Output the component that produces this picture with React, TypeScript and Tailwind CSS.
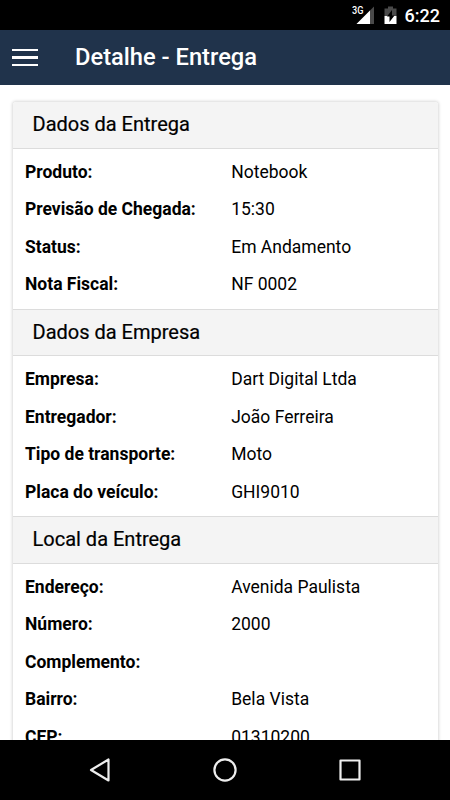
const sections = [
  {
    title: 'Dados da Entrega',
    rows: [
      ['Produto:', 'Notebook'],
      ['Previsão de Chegada:', '15:30'],
      ['Status:', 'Em Andamento'],
      ['Nota Fiscal:', 'NF 0002'],
    ],
  },
  {
    title: 'Dados da Empresa',
    rows: [
      ['Empresa:', 'Dart Digital Ltda'],
      ['Entregador:', 'João Ferreira'],
      ['Tipo de transporte:', 'Moto'],
      ['Placa do veículo:', 'GHI9010'],
    ],
  },
  {
    title: 'Local da Entrega',
    rows: [
      ['Endereço:', 'Avenida Paulista'],
      ['Número:', '2000'],
      ['Complemento:', ''],
      ['Bairro:', 'Bela Vista'],
      ['CEP:', '01310200'],
    ],
  },
];

function StatusBar() {
  return (
    <div className="flex h-[30px] shrink-0 items-center justify-end bg-black pr-[10px] text-white">
      <svg width="24" height="30" viewBox="0 0 24 30" className="mr-[9px]">
        <path d="M23 6.5V24H5.5z" fill="#4a4a4a" />
        <path d="M19 10.5V24H5.5z" fill="#fff" />
        <rect width="13.5" height="15" fill="#000" />
        <text x="1" y="14" fill="#fff" fontSize="10.5" fontWeight="500" textLength="11.5" lengthAdjust="spacingAndGlyphs">
          3G
        </text>
      </svg>
      <svg width="13" height="30" viewBox="0 0 13 30" className="mr-[8px]">
        <path d="M4 6.5h5v2h3.5V16H.5V8.5H4z" fill="#4a4a4a" />
        <path d="M.5 16h12v8H.5z" fill="#fff" />
        <path d="M8 10v5.5h2.5L5.5 22v-5.500H3z" fill="#000" />
      </svg>
      <span className="pt-px text-[18px] font-medium leading-[30px]">6:22</span>
    </div>
  );
}

function Header() {
  return (
    <header className="flex h-[54.5px] shrink-0 items-center bg-[#20334b] pl-3 text-white">
      <button className="flex w-[26px] flex-col gap-[5px]" aria-label="Menu">
        <span className="h-[2.5px] w-full bg-white" />
        <span className="h-[2.5px] w-full bg-white" />
        <span className="h-[2.5px] w-full bg-white" />
      </button>
      <h1 className="ml-[37px] pt-px text-[23.7px] font-medium">Detalhe - Entrega</h1>
    </header>
  );
}

function NavBar() {
  return (
    <nav className="flex h-[60px] shrink-0 items-center justify-center gap-[95px] bg-black">
      <svg width="30" height="30" viewBox="0 0 30 30" fill="none" stroke="#eee" strokeWidth="2.2" strokeLinejoin="round">
        <path d="M23.5 4.5v21L6 15z" />
      </svg>
      <svg width="30" height="30" viewBox="0 0 30 30" fill="none" stroke="#eee" strokeWidth="2.2">
        <circle cx="15" cy="15" r="10.6" />
      </svg>
      <svg width="30" height="30" viewBox="0 0 30 30" fill="none" stroke="#eee" strokeWidth="2.2" strokeLinejoin="round">
        <rect x="5.5" y="5.5" width="19" height="19" />
      </svg>
    </nav>
  );
}

export default function App() {
  return (
    <div className="flex h-[800px] w-[450px] flex-col overflow-hidden bg-white font-['Roboto',sans-serif] text-black">
      <StatusBar />
      <Header />
      <main className="min-h-0 flex-1 overflow-hidden px-[12.5px] pt-[17.5px]">
        <div className="overflow-hidden rounded-[3px] shadow-[0_0_3px_1px_rgba(0,0,0,0.15)]">
          {sections.map((section, index) => (
            <section key={section.title} className={index > 0 ? 'border-t border-[#dcdcdc]' : ''}>
              <h2 className="h-[46.5px] border-b border-[#dcdcdc] bg-[#f4f4f4] pl-5 text-[20px] leading-[45px] [-webkit-text-stroke:0.2px_black]">
                {section.title}
              </h2>
              <dl className="pb-[5.5px] pt-[4.5px]">
                {section.rows.map(([label, value]) => (
                  <div key={label} className="flex h-[37.5px] items-center pl-[12.5px] text-[17.5px]">
                    <dt className="w-[206.2px] font-bold">{label}</dt>
                    <dd>{value}</dd>
                  </div>
                ))}
              </dl>
            </section>
          ))}
        </div>
      </main>
      <NavBar />
    </div>
  );
}
